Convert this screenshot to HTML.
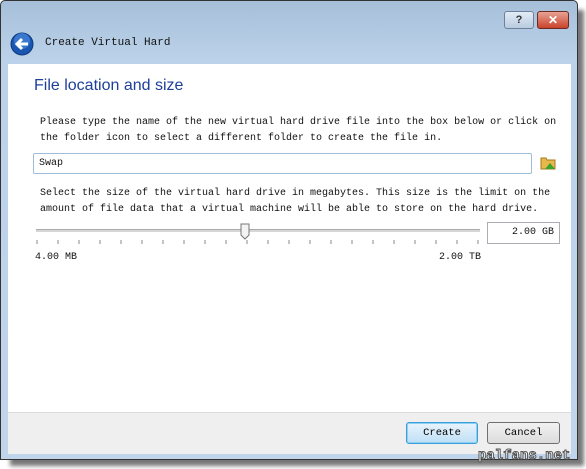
<html><head><style>
body{margin:0;width:586px;height:469px;background:#fff;position:relative;overflow:hidden;font-family:"Liberation Mono",monospace;}
.shadow{position:absolute;left:10px;top:10px;width:574px;height:456px;background:#777;filter:blur(2px);}
.win{position:absolute;left:0;top:0;width:576px;height:458px;border:1px solid #333;border-radius:5px 5px 0 0;background:linear-gradient(#a6bfd9,#bcd2ea 60px,#c0d5ec);}
.content{position:absolute;left:7px;top:63px;width:563px;height:348px;background:#fff;}
.foot{position:absolute;left:7px;top:411px;width:563px;height:41px;background:#efefef;border-top:1px solid #dcdcdc;}
.t{position:absolute;font-size:10px;color:#111;white-space:pre;line-height:16px;}
.btn{position:absolute;height:20px;border:1px solid #707070;border-radius:3px;background:linear-gradient(#f2f2f2,#dcdcdc);font-size:10.5px;text-align:center;line-height:20px;}
</style></head><body>
<div class="shadow"></div>
<div class="win">
 <div style="position:absolute;left:503px;top:10px;width:28px;height:16px;border:1px solid #6f8199;border-radius:3px;background:linear-gradient(#e3ecf6,#b9cbe0);text-align:center;font:bold 11px 'Liberation Sans';line-height:16px;color:#333">?</div>
 <div style="position:absolute;left:536px;top:10px;width:30px;height:16px;border:1px solid #6b2a22;border-radius:3px;background:linear-gradient(#e8a293,#c9432c);text-align:center;font:bold 12px 'Liberation Sans';line-height:16px;color:#fff">✕</div>
 <svg style="position:absolute;left:9px;top:31px" width="24" height="24"><circle cx="12" cy="12" r="11" fill="#1a55b0" stroke="#0c3a80"/><circle cx="12" cy="9" r="8" fill="#4f8fe0" opacity=".6"/><path d="M18 12H8M12 7L7 12L12 17" stroke="#fff" stroke-width="3" fill="none"/></svg>
 <div class="t" style="left:44px;top:34px;font-size:11px">Create Virtual Hard</div>
 <div style="position:absolute;left:44px;top:51px;width:40px;height:3px;overflow:hidden"><div class="t" style="top:-12px;font-size:11px">Drive</div></div>
 <div class="content">
  <div style="position:absolute;left:26px;top:13px;font:16px 'Liberation Sans',sans-serif;color:#1e3f9a">File location and size</div>
  <div class="t" style="left:32px;top:51px">Please type the name of the new virtual hard drive file into the box below or click on
the folder icon to select a different folder to create the file in.</div>
  <div style="position:absolute;left:25px;top:89px;width:497px;height:19px;border:1px solid #9fbcd9;border-radius:2px"></div>
  <div class="t" style="left:31px;top:92px">Swap</div>
  <svg style="position:absolute;left:532px;top:91px" width="16" height="16"><path d="M1 3h5l1 2h8v9H1z" fill="#e8b84a" stroke="#a57a1c"/><path d="M5 14l5-6 5 6z" fill="#3fa22e"/></svg>
  <div class="t" style="left:32px;top:122px">Select the size of the virtual hard drive in megabytes. This size is the limit on the
amount of file data that a virtual machine will be able to store on the hard drive.</div>
  <div style="position:absolute;left:28px;top:165px;width:444px;height:2px;background:#d6d6d6;border-top:1px solid #aaa"></div>
  <svg style="position:absolute;left:232px;top:159px" width="10" height="18"><path d="M1 1h8v11l-4 4-4-4z" fill="#f3f3f3" stroke="#777"/></svg>
  <svg style="position:absolute;left:28px;top:176px" width="446" height="6"><g stroke="#888"><path d="M1 0v4M22 0v4M43 0v4M64 0v4M85 0v4M106 0v4M127 0v4M148 0v4M169 0v4M190 0v4M211 0v4M232 0v4M253 0v4M274 0v4M295 0v4M316 0v4M337 0v4M358 0v4M379 0v4M400 0v4M421 0v4M442 0v4"/></g></svg>
  <div style="position:absolute;left:479px;top:158px;width:71px;height:20px;border:1px solid #abadb3;background:#fff"></div>
  <div class="t" style="left:479px;top:161px;width:67px;text-align:right">2.00 GB</div>
  <div class="t" style="left:27px;top:186px">4.00 MB</div>
  <div class="t" style="left:431px;top:186px">2.00 TB</div>
 </div>
 <div class="foot">
  <div class="btn" style="left:398px;top:9px;width:70px;border-color:#3c9ed8;background:linear-gradient(#e8f4fc,#bfe0f6);box-shadow:inset 0 0 0 1px #8ed0f4">Create</div>
  <div class="btn" style="left:479px;top:9px;width:71px">Cancel</div>
 </div>
</div>
<div style="position:absolute;left:478px;top:448px;font:bold 14px 'Liberation Mono';color:#fff;letter-spacing:0;-webkit-text-stroke:1px #555">palfans.net</div>
</body></html>
